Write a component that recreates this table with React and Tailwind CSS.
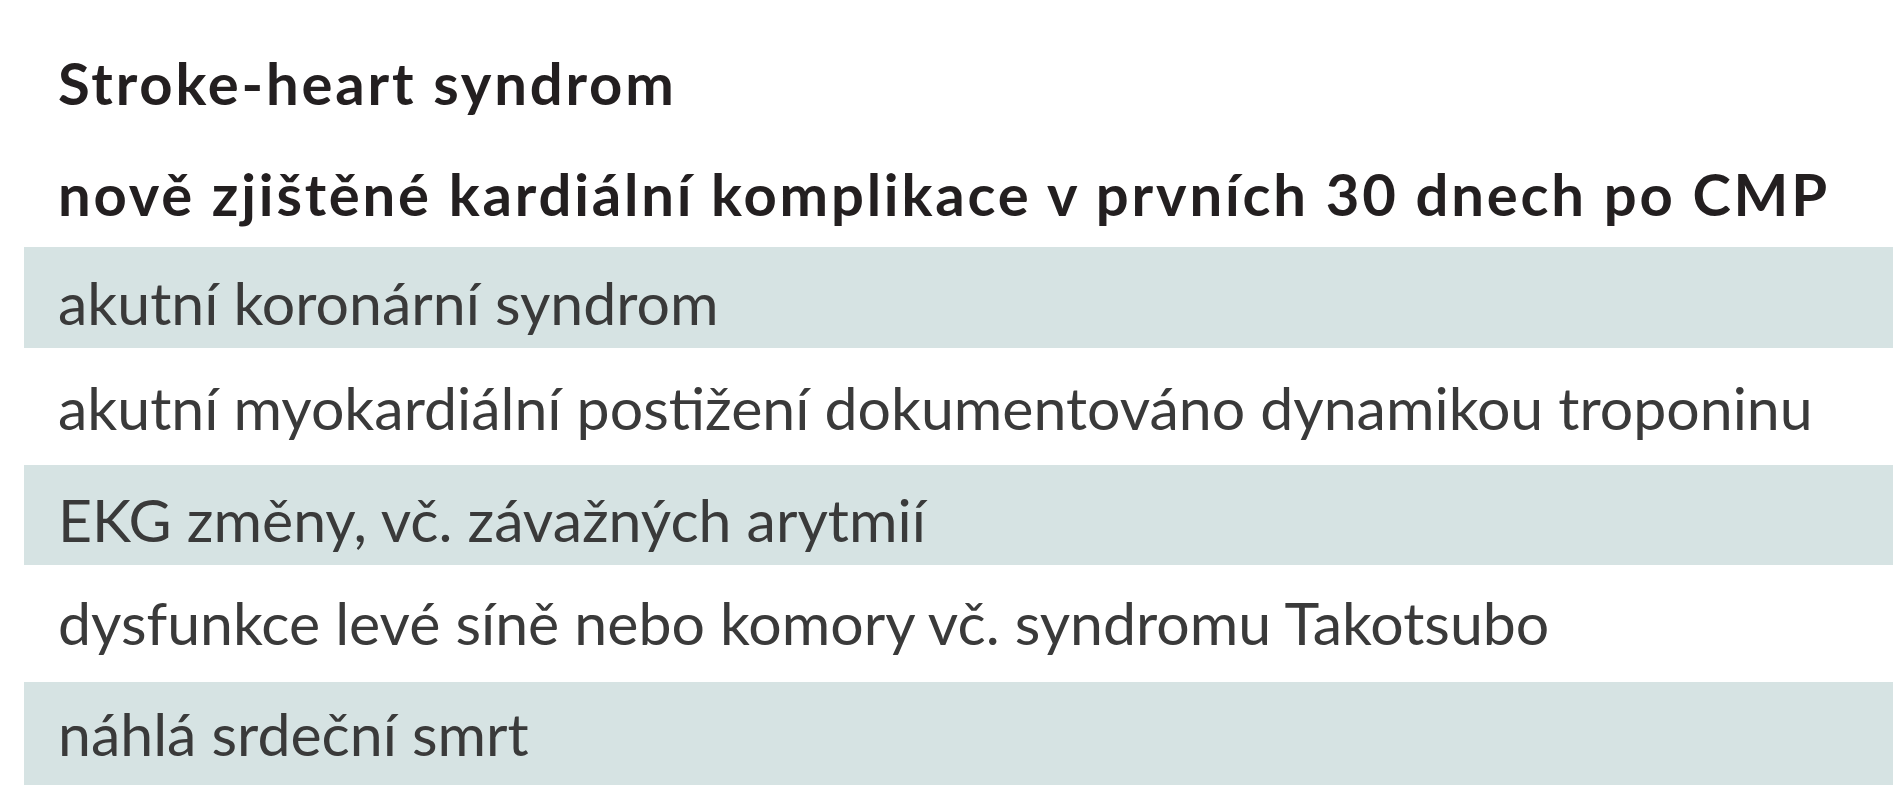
import React from "react";

const rows = [
  { text: "akutní koronární syndrom", shaded: true, h: "h-[101px]", pt: "pt-[26px]" },
  { text: "akutní myokardiální postižení dokumentováno dynamikou troponinu", shaded: false, h: "h-[117px]", pt: "pt-[30px]" },
  { text: "EKG změny, vč. závažných arytmií", shaded: true, h: "h-[100px]", pt: "pt-[25px]" },
  { text: "dysfunkce levé síně nebo komory vč. syndromu Takotsubo", shaded: false, h: "h-[117px]", pt: "pt-[28px]" },
  { text: "náhlá srdeční smrt", shaded: true, h: "h-[103px]", pt: "pt-[22px]" },
];

export default function App() {
  return (
    <div className="w-[1893px] h-[800px] bg-white overflow-hidden pl-[24px] font-['Lato','Open_Sans',sans-serif] leading-none">
      <div className="h-[140px] pl-[34px] pt-[54px] text-[58px] font-bold tracking-[2.8px] text-[#231f20] whitespace-nowrap">
        Stroke-heart syndrom
      </div>
      <div className="h-[107px] pl-[34px] pt-[25px] text-[58px] font-bold tracking-[2.8px] text-[#231f20] whitespace-nowrap">
        nově zjištěné kardiální komplikace v prvních 30 dnech po CMP
      </div>
      {rows.map((r, i) => (
        <div
          key={i}
          className={`${r.h} ${r.pt} pl-[34px] text-[59px] text-[#3a3a3a] whitespace-nowrap ${r.shaded ? "bg-[#d6e3e3]" : "bg-white"}`}
        >
          {r.text}
        </div>
      ))}
    </div>
  );
}
